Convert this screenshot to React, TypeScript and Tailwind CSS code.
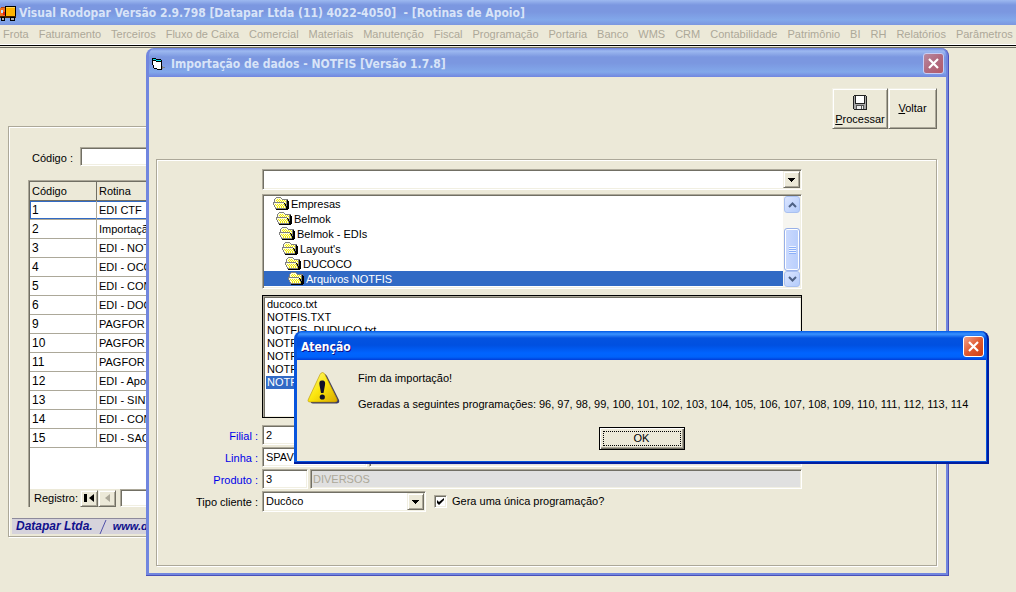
import type { ReactNode } from "react";

const SUNKEN =
  "border border-t-[#aca899] border-l-[#aca899] border-r-white border-b-white shadow-[inset_1px_1px_0_#716f64,inset_-1px_-1px_0_#f1efe2]";
const RAISED =
  "border border-t-[#f1efe2] border-l-[#f1efe2] border-r-[#716f64] border-b-[#716f64] bg-[#ece9d8] shadow-[inset_1px_1px_0_#ffffff,inset_-1px_-1px_0_#aca899]";
const ETCHED = "border border-[#aca899] shadow-[1px_1px_0_#ffffff,inset_1px_1px_0_#ffffff]";

const menus = [
  "Frota", "Faturamento", "Terceiros", "Fluxo de Caixa", "Comercial", "Materiais", "Manutenção",
  "Fiscal", "Programação", "Portaria", "Banco", "WMS", "CRM", "Contabilidade", "Patrimônio", "BI",
  "RH", "Relatórios", "Parâmetros",
];

const rotinas = [
  ["1", "EDI CTF"],
  ["2", "Importação"],
  ["3", "EDI - NOTFIS"],
  ["4", "EDI - OCOREN"],
  ["5", "EDI - CONEMB"],
  ["6", "EDI - DOCCOB"],
  ["9", "PAGFOR"],
  ["10", "PAGFOR"],
  ["11", "PAGFOR"],
  ["12", "EDI - Apolice"],
  ["13", "EDI - SINTEGRA"],
  ["14", "EDI - CONEMB"],
  ["15", "EDI - SAC"],
];

const folders = [
  { name: "Empresas", pad: "pl-[9px]" },
  { name: "Belmok", pad: "pl-[12px]" },
  { name: "Belmok - EDIs", pad: "pl-[15px]" },
  { name: "Layout's", pad: "pl-[18px]" },
  { name: "DUCOCO", pad: "pl-[21px]" },
  { name: "Arquivos NOTFIS", pad: "pl-[24px]" },
];

const files = ["ducoco.txt", "NOTFIS.TXT", "NOTFIS_DUDUCO.txt", "NOTFIS", "NOTFIS", "NOTFIS", "NOTFIS"];

function TruckIcon() {
  return (
    <svg width="16" height="16" viewBox="0 0 16 16" shapeRendering="crispEdges" aria-hidden="true">
      <path d="M5 1h11v11H5z" fill="#000" />
      <path d="M6 2h9v9H6z" fill="#ffb400" />
      <path d="M6 2h9v1H6z" fill="#ffd75a" />
      <path d="M0 3h5v9H0z" fill="#f07020" />
      <path d="M1 2h4v1H1z" fill="#b04010" />
      <path d="M1 5h2v3H1z" fill="#bfe6ff" />
      <path d="M3 7h2v3H3z" fill="#e02010" />
      <path d="M0 11h16v2H0z" fill="#402000" />
      <path d="M1 12h4v4H1zM10 12h5v4h-5z" fill="#000" />
      <path d="M2 13h2v2H2zM11 13h3v2h-3z" fill="#b0b0b0" />
    </svg>
  );
}

function FormIcon() {
  return (
    <svg width="13" height="12" viewBox="0 0 13 12" shapeRendering="crispEdges" aria-hidden="true">
      <path d="M0 0h4v1h5v1h1v10H5v-1H2v-1H1V7H0z" fill="#000" />
      <path d="M1 1h3v1h5v1H4V2H1z" fill="#00e0e0" />
      <path d="M1 3h3v1h5v7H5v-1H2V7H1z" fill="#fff" />
      <path d="M10 8h1v1h2v1h-2v1h-1z" fill="#808080" />
    </svg>
  );
}

const folderPixels = [
  "...ggggg........",
  "..gwwwwwg.......",
  ".gwwywywwgggggg.",
  ".gwywywywywywgk.",
  ".gwwywywywywygkk",
  "gggggggggggwwgkk",
  "gwwwwwwwwwwkygkk",
  "gwywywywywygkgkk",
  ".gwywywywywykgkk",
  ".gwwywywywywgkkk",
  "..gwywywywywykkk",
  "..gggggggggggkkk",
  "...kkkkkkkkkkkk.",
];
const folderColors: Record<string, string> = { g: "#808080", w: "#fdfdd8", y: "#f4ec00", k: "#000000" };

function FolderIcon() {
  return (
    <svg width="16" height="13" viewBox="0 0 16 13" shapeRendering="crispEdges" aria-hidden="true">
      {folderPixels.flatMap((row, y) =>
        [...row].map((c, x) =>
          c === "." ? null : <rect key={`${x}-${y}`} x={x} y={y} width="1" height="1" fill={folderColors[c]} />,
        ),
      )}
    </svg>
  );
}

function DiskIcon() {
  return (
    <svg width="14" height="15" viewBox="0 0 14 15" shapeRendering="crispEdges" aria-hidden="true">
      <path d="M1 0h12v1h1v14H1v-1H0V1h1z" fill="#222" />
      <path d="M1 1h12v13H1z" fill="#a8a8a8" />
      <path d="M2 1h1v8H2zM11 1h1v8h-1zM3 8h8v1H3z" fill="#222" />
      <path d="M3 1h8v7H3z" fill="#fff" />
      <path d="M3 10h8v4H3z" fill="#555" />
      <path d="M4 11h6v3H4z" fill="#eee" />
      <path d="M8 11h1v3H8z" fill="#555" />
    </svg>
  );
}

function WarningIcon() {
  return (
    <svg className="shrink-0" width="34" height="34" viewBox="0 0 34 34" aria-hidden="true">
      <defs>
        <linearGradient id="warn" x1="0" y1="0" x2="1" y2="1">
          <stop offset="0" stopColor="#fffb8a" />
          <stop offset="0.5" stopColor="#fbe50c" />
          <stop offset="1" stopColor="#d8a800" />
        </linearGradient>
      </defs>
      <path d="M17 3 Q19 3 20 5 L32 29 Q33 32 30 32.500 H6 Q3 32 4 30z" fill="#3a3a66" />
      <path d="M15.500 1.500 Q17 1.500 18 3.500 L30 28 Q31 31 28 31 H3 Q0 31 1.500 28 L13 3.500 Q14 1.500 15.500 1.500z" fill="url(#warn)" stroke="#b89400" strokeWidth="0.600" />
      <path d="M15 9.500c3 0 3.500 2 3 4.500l-1.500 8h-2.500l-1.500-8c-.5-2.500 0-4.500 2.500-4.500z" fill="#10102a" />
      <circle cx="15.300" cy="26" r="2.600" fill="#10102a" />
    </svg>
  );
}

function DownArrow() {
  return (
    <svg width="7" height="4" viewBox="0 0 7 4" shapeRendering="crispEdges" aria-hidden="true">
      <path d="M0 0h7v1H6v1H5v1H4v1H3V3H2V2H1V1H0z" />
    </svg>
  );
}

function Chevron({ up = false }: { up?: boolean }) {
  return (
    <svg width="9" height="6" viewBox="0 0 9 6" aria-hidden="true">
      <path d={up ? "M1 5l3.500-3.500L8 5" : "M1 1l3.500 3.500L8 1"} fill="none" stroke="#4d6185" strokeWidth="2" />
    </svg>
  );
}

function CloseButton({ active = false }: { active?: boolean }) {
  return (
    <button
      aria-label="Fechar"
      className={
        active
          ? "flex size-[21px] items-center justify-center rounded-[3px] border border-white bg-linear-to-br from-[#f0a088] via-[#e05a30] to-[#d03c10]"
          : "flex size-[21px] items-center justify-center rounded-[3px] border border-[#c8cdf4] bg-linear-to-br from-[#b88aa0] via-[#b06a80] to-[#b45a68]"
      }
    >
      <svg width="13" height="13" viewBox="0 0 13 13" aria-hidden="true">
        <path d="M2 2l9 9M11 2l-9 9" stroke="#fff" strokeWidth="2.200" />
      </svg>
    </button>
  );
}

function Combo({ id, label, options, className }: { id: string; label?: string; options: string[]; className: string }) {
  return (
    <div className={`relative h-[21px] bg-white ${SUNKEN} ${className}`}>
      <select id={id} aria-label={label} className="block h-[19px] w-full appearance-none bg-transparent pl-[3px] pr-5 text-[11px] leading-[19px] outline-none">
        {options.map((o) => (
          <option key={o}>{o}</option>
        ))}
      </select>
      <span className={`pointer-events-none absolute top-px right-px flex h-[17px] w-[17px] items-center justify-center ${RAISED}`}>
        <DownArrow />
      </span>
    </div>
  );
}

function FormRow({ id, label, blue = true, children }: { id: string; label: string; blue?: boolean; children: ReactNode }) {
  return (
    <div className="flex items-center">
      <label htmlFor={id} className={blue ? "w-[101px] pt-[2px] text-right text-[#0000e8]" : "w-[101px] pt-[2px] text-right"}>
        {label}
      </label>
      <div className="ml-1 flex flex-1 items-center gap-[2px]">{children}</div>
    </div>
  );
}

function Rotinas() {
  return (
    <section className={`absolute top-[126px] left-[8px] w-[500px] ${ETCHED}`}>
      <div className="flex items-center pt-5 pl-[23px]">
        <label htmlFor="codigo" className="w-[48px] pt-1">Código :</label>
        <input id="codigo" className={`h-[19px] w-40 bg-white px-1 outline-none ${SUNKEN}`} />
      </div>
      <div className="mt-[14px] ml-[19px] border-t border-l border-[#aca899]">
        <div className="h-[326px] border-t border-l border-[#716f64] bg-white">
          <table className="w-full table-fixed border-separate border-spacing-0">
            <thead>
              <tr className="h-[19px] bg-[#ece9d8] text-left">
                <th className="w-[67px] border-r border-b border-[#716f64] pl-[2px] font-normal">Código</th>
                <th className="border-b border-[#716f64] pl-[2px] font-normal">Rotina</th>
              </tr>
            </thead>
            <tbody>
              {rotinas.map(([cod, nome], i) => (
                <tr key={cod} className="h-[19px]">
                  <td className={`border-r border-b border-[#aca899] pl-[2px] text-[12px] leading-[18px] ${i === 0 ? "shadow-[inset_1px_1px_0_#316ac5,inset_0_-1px_0_#316ac5]" : ""}`}>{cod}</td>
                  <td className={`truncate border-b border-[#aca899] pl-[2px] ${i === 0 ? "shadow-[inset_0_1px_0_#316ac5,inset_0_-1px_0_#316ac5]" : ""}`}>{nome}</td>
                </tr>
              ))}
            </tbody>
          </table>
          <div className="mt-[41px] flex h-[18px] items-center bg-[#ece9d8] pl-1">
            <span className="w-[46px]">Registro:</span>
            <button aria-label="Primeiro" className={`flex h-[17px] w-[18px] items-center justify-center ${RAISED}`}>
              <svg width="11" height="8" viewBox="0 0 11 8" aria-hidden="true"><path d="M0 0h3v8H0zM10 0v8L5 4z" /></svg>
            </button>
            <button aria-label="Anterior" className={`flex h-[17px] w-[18px] items-center justify-center ${RAISED}`}>
              <svg width="6" height="8" viewBox="0 0 6 8" aria-hidden="true"><path d="M6 0v8L1 4z" fill="#aca899" /></svg>
            </button>
            <input aria-label="Registro atual" className={`ml-1 h-[18px] w-40 bg-white outline-none ${SUNKEN}`} />
          </div>
        </div>
      </div>
      <footer className="mt-[11px] mb-[2px] ml-[3px] flex h-[16px] items-center gap-[6px] border-t border-[#8d8a9b] bg-[#d6d3dc] pl-1 text-[12px] leading-[15px] font-bold text-[#10108c] italic">
        <span>Datapar Ltda.</span>
        <svg width="8" height="14" viewBox="0 0 8 14" aria-hidden="true"><path d="M7 0L1 14" stroke="#5050a8" /></svg>
        <span className="text-[11px]">www.datapar</span>
      </footer>
    </section>
  );
}

function FolderList() {
  return (
    <div className={`mt-1 flex h-[95px] bg-white p-px ${SUNKEN}`}>
      <ul className="flex-1">
        {folders.map((f, i) => (
          <li key={f.name} className={`flex h-[15px] items-center gap-[2px] leading-[15px] ${f.pad} ${i === 5 ? "bg-[#316ac5] text-white" : ""}`}>
            <FolderIcon />
            <span className="pt-px">{f.name}</span>
          </li>
        ))}
      </ul>
      <div className="flex w-[17px] flex-col bg-[#f6f5f0] pl-px">
        <button aria-label="Subir" className="flex h-[17px] items-center justify-center rounded-[3px] border border-[#a9c0f0] bg-linear-to-br from-[#dbe5ff] to-[#b4ccfb]"><Chevron up /></button>
        <div className="mt-[15px] flex h-[43px] items-center justify-center rounded-[3px] border border-[#98b0e8] bg-linear-to-r from-[#cbdafe] to-[#b8cefc] shadow-[inset_0_0_0_1px_#ffffff]">
          <div className="h-[8px] w-[7px] bg-[repeating-linear-gradient(#eef4ff_0_1px,#8cb0f8_1px_2px)]" />
        </div>
        <button aria-label="Descer" className="flex h-[16px] items-center justify-center rounded-[3px] border border-[#a9c0f0] bg-linear-to-br from-[#dbe5ff] to-[#b4ccfb]"><Chevron /></button>
      </div>
    </div>
  );
}

function ImportWindow() {
  return (
    <section className="absolute top-[48px] left-[146px] w-[803px] rounded-t-[8px] border-r border-b border-[#4a50b8] bg-[#7186df] pr-[2px] pb-[2px] pl-[3px]">
      <header className="flex h-[29px] items-center gap-[6px] rounded-t-[7px] bg-[linear-gradient(#6c80dc_0,#9db9f0_3px,#7b97e0_9px,#7b97e0_15px,#82a8ea_24px,#7186df_29px)] pt-[2px] pr-[2px] pl-[3px]">
        <FormIcon />
        <h2 className="flex-1 pt-[2px] font-['DejaVu_Sans_Condensed','DejaVu_Sans',sans-serif] text-[12px] font-bold text-[#d8e4f8]">
          Importação de dados - NOTFIS [Versão 1.7.8]
        </h2>
        <CloseButton />
      </header>
      <div className="bg-[#ece9d8] pt-[11px] pr-[9px] pb-[7px] pl-[7px]">
        <div className="flex justify-end">
          <button className={`flex h-[41px] w-[56px] flex-col items-center justify-end gap-[3px] pb-[2px] ${RAISED}`}>
            <DiskIcon />
            <span><u>P</u>rocessar</span>
          </button>
          <button className={`h-[41px] w-[49px] ${RAISED}`}><u>V</u>oltar</button>
        </div>
        <form className={`mt-[30px] h-[407px] pt-[9px] pr-[134px] ${ETCHED}`}>
          <div className="pl-[105px]">
            <Combo id="drive" label="Unidade" options={[""]} className="w-full" />
            <FolderList />
            <ul className="mt-[6px] h-[123px] border border-black bg-white px-[3px] py-[2px] shadow-[inset_1px_1px_0_#aca899,inset_2px_2px_0_#716f64,inset_-1px_-1px_0_#f1efe2]">
              {files.map((f, i) => (
                <li key={i} className={i === 6 ? "bg-[#316ac5] pl-px leading-[13px] text-white" : "pl-px leading-[13px]"}>{f}</li>
              ))}
            </ul>
          </div>
          <div className="mt-[7px] flex flex-col gap-[2px]">
            <FormRow id="filial" label="Filial :">
              <input id="filial" defaultValue="2" className={`h-[20px] w-[46px] bg-white pl-[3px] outline-none ${SUNKEN}`} />
              <input aria-label="Nome da filial" readOnly className={`h-[20px] flex-1 bg-[#e0e0e0] ${SUNKEN}`} />
            </FormRow>
            <FormRow id="linha" label="Linha :">
              <input id="linha" defaultValue="SPAV" className={`h-[20px] w-[105px] bg-white pl-[3px] outline-none ${SUNKEN}`} />
              <input aria-label="Nome da linha" readOnly className={`h-[20px] flex-1 bg-[#e0e0e0] ${SUNKEN}`} />
            </FormRow>
            <FormRow id="produto" label="Produto :">
              <input id="produto" defaultValue="3" className={`h-[20px] w-[46px] bg-white pl-[3px] outline-none ${SUNKEN}`} />
              <input aria-label="Nome do produto" readOnly value="DIVERSOS" className={`h-[20px] flex-1 bg-[#e0e0e0] pl-[2px] text-[#aca899] outline-none ${SUNKEN}`} />
            </FormRow>
            <FormRow id="tipo" label="Tipo cliente :" blue={false}>
              <Combo id="tipo" options={["Ducôco"]} className="w-[164px]" />
              <label className="ml-[6px] flex items-center gap-[5px]">
                <span className="relative flex size-[13px]">
                  <input type="checkbox" defaultChecked className={`size-[13px] appearance-none bg-white ${SUNKEN}`} />
                  <svg className="pointer-events-none absolute top-[3px] left-[3px]" width="7" height="7" viewBox="0 0 7 7" aria-hidden="true">
                    <path d="M0 2v3l2 2 5-5V0L2 4z" />
                  </svg>
                </span>
                Gera uma única programação?
              </label>
            </FormRow>
          </div>
        </form>
      </div>
    </section>
  );
}

function AlertBox() {
  return (
    <section
      role="alertdialog"
      aria-labelledby="alert-title"
      className="absolute top-[331px] left-[294px] w-[695px] rounded-t-[8px] border-r-2 border-b-2 border-[#001ea0] bg-[#0855dd] pr-px pb-px pl-[3px]"
    >
      <header className="flex h-[29px] items-center rounded-t-[7px] bg-[linear-gradient(#0058e6_0,#3a93ff_3px,#0453e0_7px,#0050e0_14px,#0064ff_22px,#0062fa_26px,#003dd7_29px)] pt-[2px] pr-[2px] pl-1">
        <h2 id="alert-title" className="flex-1 pt-[2px] font-['DejaVu_Sans_Condensed','DejaVu_Sans',sans-serif] text-[12px] font-bold text-white [text-shadow:1px_1px_0_#0f1089]">
          Atenção
        </h2>
        <CloseButton active />
      </header>
      <div className="bg-[#ece9d8] px-[10px] pt-[11px] pb-[11px]">
        <div className="flex gap-[17px]">
          <WarningIcon />
          <div className="h-[56px] whitespace-nowrap">
            <p className="leading-[14px]">Fim da importação!</p>
            <p className="mt-3 leading-[14px]">
              Geradas a seguintes programações: 96, 97, 98, 99, 100, 101, 102, 103, 104, 105, 106, 107, 108, 109, 110, 111, 112, 113, 114
            </p>
          </div>
        </div>
        <div className="flex justify-center">
          <button className="h-[23px] w-[86px] border border-black bg-[#ece9d8] p-[3px] shadow-[inset_1px_1px_0_#ffffff,inset_-1px_-1px_0_#716f64,inset_-2px_-2px_0_#aca899]">
            <span className="block border border-dotted border-black leading-[13px]">OK</span>
          </button>
        </div>
      </div>
    </section>
  );
}

export default function App() {
  return (
    <main className="relative min-h-screen w-full overflow-hidden bg-[#ece9d8] font-['Liberation_Sans',Arial,sans-serif] text-[11px] leading-[13px] text-black">
      <header className="flex h-[25px] items-center gap-[3px] bg-[linear-gradient(#9db9f0_0,#7b97e0_5px,#7b97e0_12px,#82a8ea_20px,#7b97e0_25px)]">
        <TruckIcon />
        <h1 className="pt-px font-['DejaVu_Sans_Condensed','DejaVu_Sans',sans-serif] text-[12px] font-bold whitespace-pre text-[#d8e4f8]">
          {"Visual Rodopar Versão 2.9.798 [Datapar Ltda (11) 4022-4050]  - [Rotinas de Apoio]"}
        </h1>
      </header>
      <nav className="flex h-[19px] items-center justify-between px-[3px] text-[#aca899]">
        {menus.map((m) => (
          <button key={m} className="whitespace-nowrap">{m}</button>
        ))}
      </nav>
      <div className="h-[4px] border-t border-white bg-[linear-gradient(#000_0_1px,#ece9d8_1px_2px,#716f64_2px)]" />
      <Rotinas />
      <ImportWindow />
      <AlertBox />
    </main>
  );
}
